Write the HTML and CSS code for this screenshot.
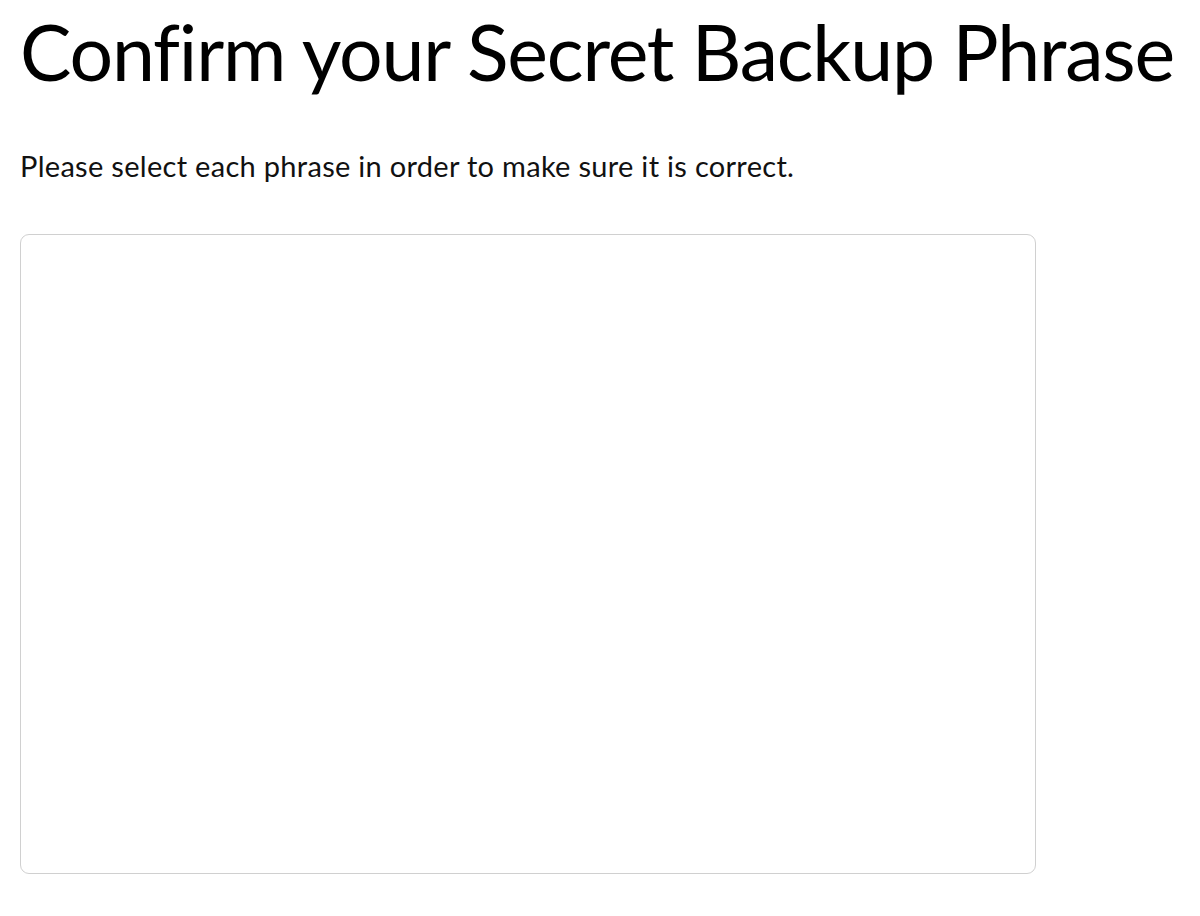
FILE: index.html
```html
<!DOCTYPE html>
<html lang="en">
<head>
<meta charset="utf-8">
<title>Confirm your Secret Backup Phrase</title>
<link rel="stylesheet" href="styles.css">
</head>
<body>
<main class="page">
  <h1 class="title">Confirm your Secret Backup Phrase</h1>
  <p class="subtitle">Please select each phrase in order to make sure it is correct.</p>
  <div class="phrase-box"></div>
</main>
</body>
</html>
```

FILE: styles.css
```css
html, body {
  margin: 0;
  padding: 0;
  background: #ffffff;
}
body {
  font-family: Lato, "Liberation Sans", sans-serif;
  color: #000000;
}
.page {
  padding: 0 20px;
  display: flex;
  flex-direction: column;
  align-items: flex-start;
}
.title {
  margin: 0;
  padding-top: 5px;
  font-size: 77px;
  font-weight: 400;
  line-height: 92px;
  letter-spacing: -1.2px;
  white-space: nowrap;
}
.subtitle {
  margin: 51px 0 0;
  font-size: 29px;
  line-height: 36px;
  font-weight: 400;
  letter-spacing: 0.3px;
  color: #111111;
}
.phrase-box {
  box-sizing: border-box;
  margin-top: 50px;
  width: 1016px;
  height: 640px;
  border: 1.5px solid #d0d0d0;
  border-radius: 9px;
  background: #ffffff;
}
```
